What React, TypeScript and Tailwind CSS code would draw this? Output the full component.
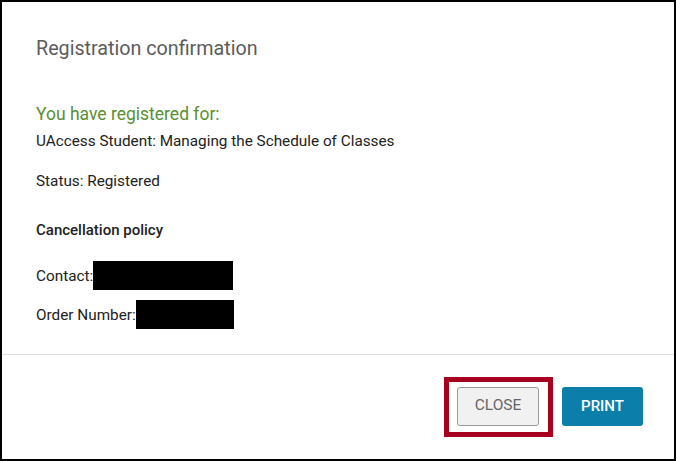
import React from "react";

export default function App() {
  return (
    <div className="h-[461px] w-[676px] bg-white font-['Roboto',_'Liberation_Sans',_sans-serif]">
      <div className="flex h-full flex-col border-2 border-black bg-white">
        {/* Body */}
        <div className="flex-1 pl-[34px] pt-[35px]">
          <h2 className="text-[19.7px] leading-6 font-normal text-[#5c5c5c]">Registration confirmation</h2>

          <p className="mt-[41px] text-[17.5px] leading-6 text-[#5a8f32]">You have registered for:</p>
          <p className="mt-[5px] text-[15.3px] leading-5 text-[#222]">UAccess Student: Managing the Schedule of Classes</p>
          <p className="mt-[20px] text-[15.3px] leading-5 text-[#222]">Status: Registered</p>

          <p className="mt-[29px] text-[15px] leading-5 font-medium text-[#222]">Cancellation policy</p>

          <div className="mt-[21px] flex h-[29px] items-center text-[15.3px] leading-5 text-[#222]">
            <span>Contact:</span>
            <span className="h-[29px] w-[140px] bg-black" />
          </div>
          <div className="mt-[10px] flex h-[29px] items-center text-[15.3px] leading-5 text-[#222]">
            <span>Order Number:</span>
            <span className="h-[29px] w-[98px] bg-black" />
          </div>
        </div>

        {/* Footer */}
        <div className="flex h-[105px] items-center justify-end gap-[9px] border-t border-[#dedede] pr-[31px] pb-[1px]">
          <div className="border-[5px] border-[#a8001f] pt-[5px] pb-[6px] pl-2 pr-[9px]">
            <button className="h-[39px] w-[82px] rounded-[3px] border border-[#9a9a9a] bg-[#f1f1f1] text-[15.5px] uppercase text-[#666]">
              Close
            </button>
          </div>
          <button className="h-[39px] w-[81px] rounded-[3px] bg-[#0b7fa9] text-[15px] font-medium uppercase text-white">
            Print
          </button>
        </div>
      </div>
    </div>
  );
}
